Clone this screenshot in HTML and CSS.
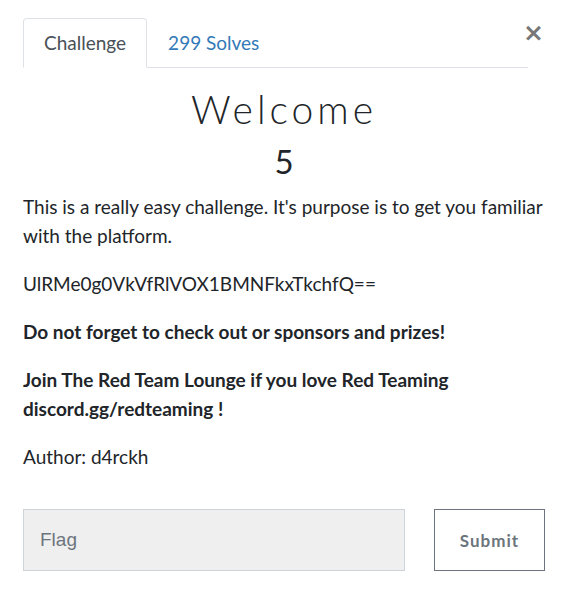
FILE: index.html
```html
<!DOCTYPE html>
<html>
<head>
<meta charset="utf-8">
<link rel="stylesheet" href="styles.css">
</head>
<body>
<div class="modal">
  <button class="close" aria-label="Close">&times;</button>
  <ul class="tabs">
    <li class="tab active">Challenge</li>
    <li class="tab link">299 Solves</li>
  </ul>
  <div class="body">
    <h2 class="title">Welcome</h2>
    <h3 class="value">5</h3>
    <div class="desc">
      <p>This is a really easy challenge. It's purpose is to get you familiar with the platform.</p>
      <p>UlRMe0g0VkVfRlVOX1BMNFkxTkchfQ==</p>
      <p><strong>Do not forget to check out or sponsors and prizes!</strong></p>
      <p><strong>Join The Red Team Lounge if you love Red Teaming discord.gg/redteaming !</strong></p>
      <p>Author: d4rckh</p>
    </div>
    <form class="submit-row">
      <input class="flag" type="text" placeholder="Flag">
      <button class="submit" type="button">Submit</button>
    </form>
  </div>
</div>
</body>
</html>
```
FILE: styles.css
```css
html, body {
  margin: 0;
  padding: 0;
  background: #fff;
}
body {
  font-family: Lato, "Open Sans", sans-serif;
  color: #212529;
}
.modal {
  position: relative;
  padding: 18px 17px 0 23px;
}
.close {
  position: absolute;
  top: 19px;
  right: 18px;
  background: none;
  border: none;
  padding: 0;
  font-family: "DejaVu Sans", sans-serif;
  font-size: 25px;
  line-height: 28px;
  font-weight: bold;
  color: #777;
  cursor: pointer;
}
.tabs {
  list-style: none;
  margin: 0 17px 0 0;
  padding: 0;
  display: flex;
  border-bottom: 1px solid #dee2e6;
}
.tab {
  font-size: 19px;
  line-height: 28px;
  padding: 10px 20px;
  margin-bottom: -1px;
  border: 1px solid transparent;
  border-radius: 4px 4px 0 0;
}
.tab.active {
  color: #495057;
  border-color: #dee2e6 #dee2e6 #fff;
  background: #fff;
}
.tab.link {
  color: #337ab7;
}
.body {
  padding-top: 18px;
}
.title {
  margin: 0;
  text-align: center;
  font-family: Lato, sans-serif;
  font-weight: 300;
  font-size: 39px;
  letter-spacing: 4px;
  line-height: 46px;
  color: #212529;
}
.value {
  margin: 9px 0 0 0;
  text-align: center;
  font-weight: 400;
  font-size: 33px;
  line-height: 40px;
  color: #212529;
}
.desc {
  margin-top: 11px;
}
.desc p {
  margin: 0 0 19px 0;
  font-size: 19px;
  line-height: 29px;
}
.desc strong {
  font-weight: 700;
}
.submit-row {
  display: flex;
  gap: 29px;
  margin-top: 38px;
}
.flag {
  box-sizing: border-box;
  width: 382px;
  height: 62px;
  background: #efefef;
  border: 1px solid #ced4da;
  padding: 0 16px;
  font-family: "Liberation Sans", Arial, sans-serif;
  font-size: 19px;
  color: #495057;
  outline: none;
}
.flag::placeholder {
  color: #6c757d;
}
.submit {
  box-sizing: border-box;
  width: 111px;
  height: 62px;
  background: #fff;
  border: 1px solid #6c757d;
  font-family: Lato, sans-serif;
  font-weight: 700;
  font-size: 17px;
  letter-spacing: 1px;
  color: #6c757d;
  padding: 0;
}
```
